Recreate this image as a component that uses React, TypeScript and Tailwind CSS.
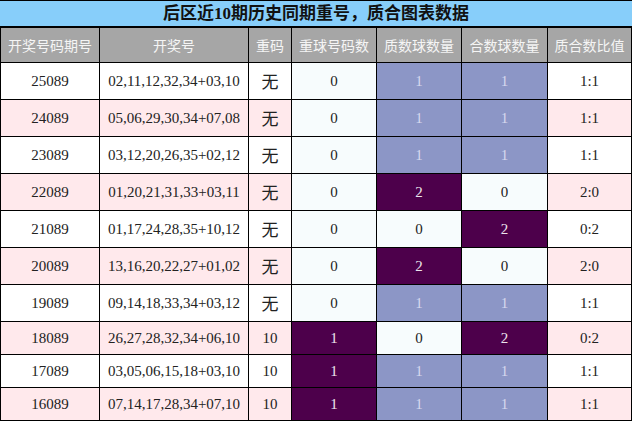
import React from "react";

type Row = [string, string, string, number, number, number, string];

const rows: Row[] = [
  ["25089", "02,11,12,32,34+03,10", "无", 0, 1, 1, "1:1"],
  ["24089", "05,06,29,30,34+07,08", "无", 0, 1, 1, "1:1"],
  ["23089", "03,12,20,26,35+02,12", "无", 0, 1, 1, "1:1"],
  ["22089", "01,20,21,31,33+03,11", "无", 0, 2, 0, "2:0"],
  ["21089", "01,17,24,28,35+10,12", "无", 0, 0, 2, "0:2"],
  ["20089", "13,16,20,22,27+01,02", "无", 0, 2, 0, "2:0"],
  ["19089", "09,14,18,33,34+03,12", "无", 0, 1, 1, "1:1"],
  ["18089", "26,27,28,32,34+06,10", "10", 1, 0, 2, "0:2"],
  ["17089", "03,05,06,15,18+03,10", "10", 1, 1, 1, "1:1"],
  ["16089", "07,14,17,28,34+07,10", "10", 1, 1, 1, "1:1"],
];

const heat = (v: number, max: number) => {
  if (v === 0) return "bg-[#f7fcfd] text-[#222]";
  if (v >= max) return "bg-[#4d004b] text-[#ece4ec]";
  return "bg-[#8c96c6] text-[#d6d9ee]";
};

const headers = ["开奖号码期号", "开奖号", "重码", "重球号码数", "质数球数量", "合数球数量", "质合数比值"];

export default function App() {
  return (
    <div className="w-[632px] h-[421px] bg-white overflow-hidden" style={{ fontFamily: '"Liberation Serif", "Noto Sans CJK SC", serif' }}>
      <div className="h-[28px] bg-[#87cefa] border-t border-b-2 border-black flex items-center justify-center text-[17px] font-bold text-[#111] leading-none">
        后区近10期历史同期重号，质合图表数据
      </div>
      <div className="grid grid-cols-[99px_149px_43px_85px_85px_86px_84px] border-l border-black">
        {headers.map((h) => (
          <div
            key={h}
            className="h-[35px] bg-[#a6a6a6] border-r border-b border-black flex items-center justify-center text-[14px] text-[#f5f5f5]"
            style={{ fontFamily: '"Noto Sans CJK SC", sans-serif' }}
          >
            {h}
          </div>
        ))}
        {rows.map((r, i) => {
          const rowBg = i % 2 === 0 ? "bg-white" : "bg-[#ffe9ec]";
          const h = r[2] === "无" ? "h-[37px]" : "h-[33px]";
          const base = `${h} border-r border-b border-black flex items-center justify-center text-[15px]`;
          return (
            <React.Fragment key={r[0]}>
              <div className={`${base} ${rowBg} text-[#222]`}>{r[0]}</div>
              <div className={`${base} ${rowBg} text-[#222]`}>{r[1]}</div>
              <div
                className={`${base} ${rowBg} text-[#222] ${r[2] === "无" ? "text-[17px]" : ""}`}
                style={r[2] === "无" ? { fontFamily: '"Noto Sans CJK SC", sans-serif' } : undefined}
              >
                {r[2]}
              </div>
              <div className={`${base} ${heat(r[3], 1)}`}>{r[3]}</div>
              <div className={`${base} ${heat(r[4], 2)}`}>{r[4]}</div>
              <div className={`${base} ${heat(r[5], 2)}`}>{r[5]}</div>
              <div className={`${base} ${rowBg} text-[#222]`}>{r[6]}</div>
            </React.Fragment>
          );
        })}
      </div>
    </div>
  );
}
